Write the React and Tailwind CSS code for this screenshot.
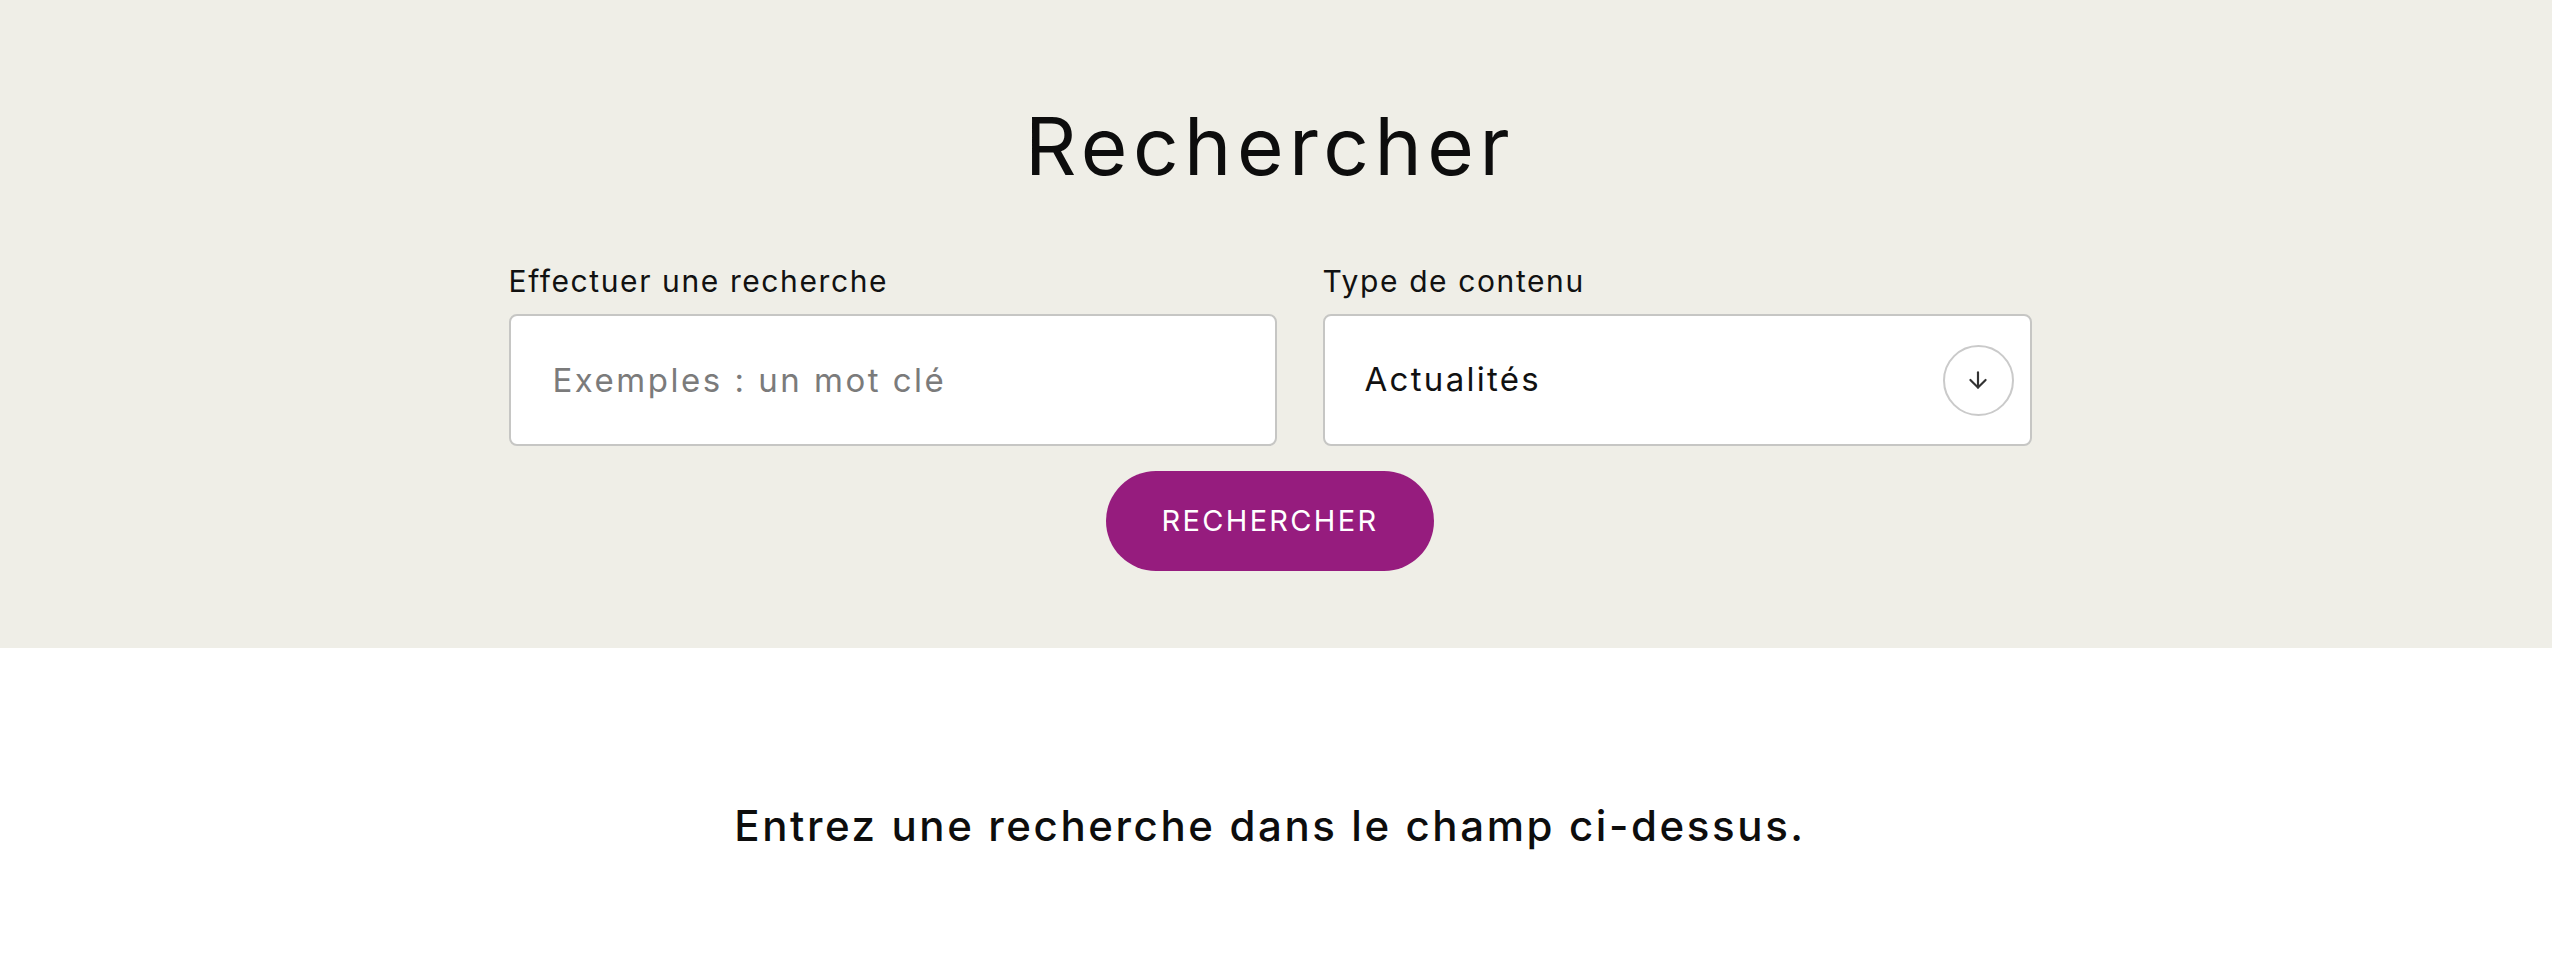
import React from "react";
import { ArrowDown } from "lucide-react";

export default function App() {
  return (
    <div className="w-full min-h-[962px] bg-white font-['Inter','Liberation_Sans',sans-serif] text-[#0d0d0d]">
      <section className="bg-[#efeee7] pt-[98px] pb-[77px] pr-[12px] flex flex-col items-center">
        <h1 className="text-[80px] leading-[96px] font-normal tracking-[5.5px] text-[#0d0d0d]">Rechercher</h1>
        <div className="mt-[69px] flex gap-[46px]">
          <div className="flex flex-col w-[768px]">
            <label className="text-[30px] leading-[36px] tracking-[1.6px] text-[#111]">Effectuer une recherche</label>
            <input
              type="text"
              placeholder="Exemples : un mot clé"
              className="mt-[15px] h-[132px] w-full rounded-[8px] border-2 border-[#c6c6c4] bg-white pl-[42px] text-[33px] tracking-[2.5px] text-[#111] placeholder:text-[#7b7b7b] outline-none"
            />
          </div>
          <div className="flex flex-col w-[709px]">
            <label className="text-[30px] leading-[36px] tracking-[1.6px] text-[#111]">Type de contenu</label>
            <div className="mt-[15px] h-[132px] w-full rounded-[8px] border-2 border-[#c6c6c4] bg-white pl-[40px] pr-[16px] flex items-center justify-between">
              <span className="text-[33px] tracking-[2.3px] text-[#111]">Actualités</span>
              <span className="w-[71px] h-[71px] rounded-full border-2 border-[#cacaca] flex items-center justify-center text-[#333]">
                <ArrowDown size={26} strokeWidth={2} />
              </span>
            </div>
          </div>
        </div>
        <button className="mt-[25px] h-[100px] w-[328px] rounded-full bg-[#961c7e] text-white text-[29px] tracking-[2.3px] uppercase">
          Rechercher
        </button>
      </section>
      <div className="pt-[153px] pr-[12px] flex justify-center">
        <p className="text-[42px] leading-[50px] font-medium tracking-[2.6px] text-[#0d0d0d]">Entrez une recherche dans le champ ci-dessus.</p>
      </div>
    </div>
  );
}
